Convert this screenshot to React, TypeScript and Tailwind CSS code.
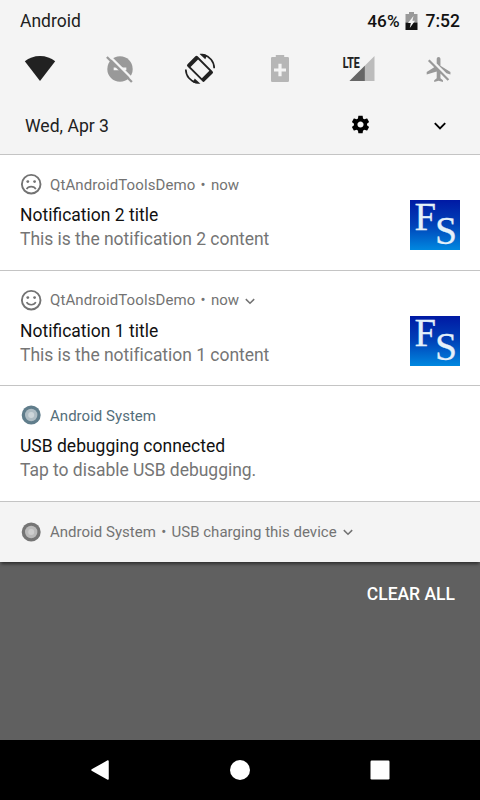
import type { ReactNode } from "react";

function StatusBar() {
  return (
    <div className="flex h-[42px] items-center justify-between px-5 text-[17.5px] leading-[20px] text-[#212121]">
      <span>Android</span>
      <div className="flex items-center font-medium text-[#111]">
        <span className="text-[17.2px]">46%</span>
        <svg className="ml-[5px] mr-2 -mt-px" width="13" height="18" viewBox="0 0 13 18">
          <path d="M0.5 2H4V0H9V2H12.5V10.5H0.5Z" fill="#999" />
          <path d="M0.5 10.5H12.5V18H0.5Z" fill="#111" />
          <path d="M8.5 4L3 11H5.8L4.8 16L10 8.8H7.4Z" fill="#f4f4f4" />
        </svg>
        <span className="text-[17.5px]">7:52</span>
      </div>
    </div>
  );
}

function QuickIcons() {
  return (
    <div className="flex h-[54px] items-center justify-between px-5">
      <svg width="40" height="40" viewBox="20 49 40 40">
        <path d="M40 81L24.8 61.3C29 58 34.2 56 40 56S51 58 55.2 61.3Z" fill="#212121" />
      </svg>
      <svg width="40" height="40" viewBox="100 49 40 40">
        <circle cx="120" cy="69" r="12.7" fill="#999" />
        <path d="M113.7 67.5H117.2L119.8 70.2H113.7Z" fill="#f4f4f4" />
        <path d="M121.5 67.5H126.3V70.2H124Z" fill="#f4f4f4" />
        <path d="M108.5 55L134 80.5" stroke="#f4f4f4" strokeWidth="2.4" />
        <path d="M106.9 57L131.9 82" stroke="#999" strokeWidth="2.3" />
      </svg>
      <svg width="40" height="40" viewBox="180 49 40 40">
        <g transform="translate(200 68.8) rotate(-45)">
          <rect x="-7.2" y="-12.1" width="14.4" height="24.2" rx="1.6" fill="#212121" />
          <rect x="-5.3" y="-8" width="10.6" height="16" fill="#f4f4f4" />
        </g>
        <path d="M203.5 54.9C209.6 56.2 214.1 61.6 214.2 68.2" fill="none" stroke="#212121" strokeWidth="1.7" />
        <path d="M199.6 53.9C202 53.7 204.5 54 207 55.2L205.3 59.2Z" fill="#212121" />
        <path d="M196.5 82.7C190.4 81.4 185.9 76 185.8 69.4" fill="none" stroke="#212121" strokeWidth="1.7" />
        <path d="M200.4 83.7C198 83.9 195.5 83.6 193 82.4L194.7 78.4Z" fill="#212121" />
      </svg>
      <svg width="40" height="40" viewBox="260 49 40 40">
        <path d="M272.3 57H275.8V55H284.2V57H287.7Q289 57 289 58.3V80.7Q289 82 287.7 82H272.3Q271 82 271 80.7V58.3Q271 57 272.3 57Z" fill="#b6b6b6" />
        <path d="M278.4 63.8H281.6V68.4H286V71.6H281.6V76.2H278.4V71.6H274V68.4H278.4Z" fill="#f4f4f4" />
      </svg>
      <svg width="40" height="40" viewBox="340 49 40 40">
        <path d="M349.5 81L374.5 56V81Z" fill="#bcbcbc" />
        <path d="M349.5 81L364.8 65.7V81Z" fill="#666" />
        <text x="342.7" y="67.6" fontSize="15" fontWeight="700" textLength="17" lengthAdjust="spacingAndGlyphs" fill="#212121" stroke="#212121" strokeWidth=".2">LTE</text>
      </svg>
      <svg width="40" height="40" viewBox="420 49 40 40">
        <g transform="translate(424.2 54.5) scale(1.25)" fill="#999">
          <path d="M13 9V3.5c0-.83-.67-1.5-1.5-1.5S10 2.67 10 3.5v3.68l7.83 7.83L21 16v-2l-8-5zM3 5.27l4.99 4.99L2 14v2l8-2.5V19l-2 1.5V22l3.5-1 3.5 1v-1.5L13 19v-3.73L18.73 21 20 19.73 4.27 4 3 5.27z" />
          <path d="M5.3 4L20.8 19.5" stroke="#f4f4f4" strokeWidth=".7" />
        </g>
      </svg>
    </div>
  );
}

function DateRow() {
  return (
    <div className="flex h-[58px] items-center pl-[25px] pr-[30px] text-[17.6px] text-[#212121]">
      <span className="flex-1 pt-[2px]">Wed, Apr 3</span>
      <svg className="mr-[59px] -mt-px" width="21" height="21" viewBox="0 0 24 24">
        <path d="M19.43 12.98c.04-.32.07-.64.07-.98s-.03-.66-.07-.98l2.11-1.65c.19-.15.24-.42.12-.64l-2-3.46c-.12-.22-.39-.3-.61-.22l-2.49 1c-.52-.4-1.08-.73-1.69-.98l-.38-2.65C14.46 2.18 14.25 2 14 2h-4c-.25 0-.46.18-.49.42l-.38 2.65c-.61.25-1.17.59-1.69.98l-2.49-1c-.23-.09-.49 0-.61.22l-2 3.46c-.13.22-.07.49.12.64l2.11 1.65c-.04.32-.07.65-.07.98s.03.66.07.98l-2.11 1.65c-.19.15-.24.42-.12.64l2 3.46c.12.22.39.3.61.22l2.49-1c.52.4 1.08.73 1.69.98l.38 2.65c.03.24.24.42.49.42h4c.25 0 .46-.18.49-.42l.38-2.65c.61-.25 1.17-.59 1.69-.98l2.49 1c.23.09.49 0 .61-.22l2-3.46c.12-.22.07-.49-.12-.64l-2.11-1.65zM12 15.5c-1.93 0-3.5-1.57-3.5-3.5s1.57-3.5 3.5-3.5 3.5 1.57 3.5 3.5-1.57 3.5-3.5 3.5z" />
      </svg>
      <svg width="20" height="20" viewBox="0 0 20 20">
        <path d="M4.8 8.2L10 13.4L15.2 8.2" fill="none" stroke="#000" strokeWidth="1.9" />
      </svg>
    </div>
  );
}

function Face({ sad = false }: { sad?: boolean }) {
  return (
    <svg width="22" height="22" viewBox="0 0 22 22">
      <circle cx="11.2" cy="11.2" r="9.3" fill="none" stroke="#737373" strokeWidth="1.9" />
      <circle cx="7.8" cy="8.6" r="1.4" fill="#737373" />
      <circle cx="14.6" cy="8.6" r="1.4" fill="#737373" />
      <path
        d={sad ? "M6.6 16.2C8.2 12.8 14.2 12.8 15.8 16.2" : "M6.6 13.2C8.2 16.6 14.2 16.6 15.8 13.2"}
        fill="none"
        stroke="#737373"
        strokeWidth="1.6"
      />
    </svg>
  );
}

function SystemDot({ blue = false }: { blue?: boolean }) {
  return (
    <svg width="22" height="22" viewBox="0 0 22 22">
      <circle cx="11.2" cy="11" r="9.5" fill={blue ? "#607d8b" : "#757575"} />
      <circle cx="11.2" cy="11" r="6.2" fill={blue ? "#afbdc4" : "#bababa"} />
      <circle cx="11.2" cy="11" r="3" fill={blue ? "#cdd6da" : "#cecece"} />
    </svg>
  );
}

function Chevron() {
  return (
    <svg className="ml-[5px]" width="12" height="12" viewBox="0 0 12 12">
      <path d="M1.8 4.1L6 8.3L10.2 4.1" fill="none" stroke="#737373" strokeWidth="1.5" />
    </svg>
  );
}

function Bullet() {
  return <span className="mx-[1.5px]"> • </span>;
}

function Logo() {
  return (
    <svg className="mt-[45px] overflow-visible" width="50" height="50" viewBox="0 0 50 50">
      <defs>
        <linearGradient id="logoFill" x1="0" y1="0" x2="0" y2="1">
          <stop offset="0" stopColor="#0019a4" />
          <stop offset=".5" stopColor="#0042b8" />
          <stop offset="1" stopColor="#0088e0" />
        </linearGradient>
      </defs>
      <rect width="50" height="50" fill="url(#logoFill)" />
      <g fill="#e4f0fa" stroke="#e4f0fa" strokeWidth=".3" fontFamily="Liberation Serif, serif">
        <text x="4.5" y="30.3" fontSize="40" textLength="21.5" lengthAdjust="spacingAndGlyphs">F</text>
        <text x="25" y="44" fontSize="41" textLength="22" lengthAdjust="spacingAndGlyphs">S</text>
      </g>
    </svg>
  );
}

type CardProps = {
  icon: ReactNode;
  app: ReactNode;
  title: string;
  body: string;
  logo?: boolean;
  className: string;
  labelClassName?: string;
};

function Card({ icon, app, title, body, logo, className, labelClassName = "pt-[2px]" }: CardProps) {
  return (
    <section className={`flex justify-between border-t border-[#c4c4c4] bg-white px-5 ${className}`}>
      <div className="pt-[18px]">
        <div className="flex h-[22px] items-center text-[15px] text-[#737373]">
          {icon}
          <div className={`ml-2 flex items-center whitespace-pre ${labelClassName}`}>{app}</div>
        </div>
        <div className="mt-[8px] text-[17.5px] leading-[25px] text-[#111]">{title}</div>
        <div className="-mt-px text-[17.5px] leading-[24px] tracking-[-0.03px] text-[#757575]">{body}</div>
      </div>
      {logo && <Logo />}
    </section>
  );
}

export default function App() {
  return (
    <main className="flex h-[800px] w-[480px] flex-col overflow-hidden bg-[#606060] font-['Roboto',sans-serif]">
      <header className="h-[154px] bg-[#f4f4f4]">
        <StatusBar />
        <QuickIcons />
        <DateRow />
      </header>
      <Card
        className="h-[116px]"
        icon={<Face sad />}
        app={<><span className="tracking-[0.1px]">QtAndroidToolsDemo</span><Bullet />now</>}
        title="Notification 2 title"
        body="This is the notification 2 content"
        logo
      />
      <Card
        className="h-[115px]"
        labelClassName="pt-px"
        icon={<Face />}
        app={<><span className="tracking-[0.1px]">QtAndroidToolsDemo</span><Bullet />now<Chevron /></>}
        title="Notification 1 title"
        body="This is the notification 1 content"
        logo
      />
      <Card
        className="h-[116px]"
        icon={<SystemDot blue />}
        app={<span className="tracking-[0.03px] text-[#546e7a]">Android System</span>}
        title="USB debugging connected"
        body="Tap to disable USB debugging."
      />
      <section className="z-10 flex h-[61px] items-center border-t border-[#c4c4c4] bg-[#f4f4f4] px-5 text-[15px] text-[#737373] shadow-[0_3px_3px_-1px_rgba(0,0,0,0.5)]">
        <SystemDot />
        <div className="ml-2 flex items-center whitespace-pre tracking-[0.02px]">
          Android System<Bullet />USB charging this device
        </div>
        <Chevron />
      </section>
      <div className="flex flex-1 items-start justify-end pr-[25px] pt-[22px]">
        <button className="text-[17.5px] leading-[20px] font-medium text-white">CLEAR ALL</button>
      </div>
      <nav className="flex h-[60px] items-center justify-between bg-black px-20">
        <svg width="40" height="40" viewBox="0 0 40 40">
          <path d="M12 20L28 11V29Z" fill="#fff" stroke="#fff" strokeWidth="1.5" strokeLinejoin="round" />
        </svg>
        <svg width="40" height="40" viewBox="0 0 40 40">
          <circle cx="20" cy="20" r="10" fill="#fff" />
        </svg>
        <svg width="40" height="40" viewBox="0 0 40 40">
          <rect x="10.5" y="10.5" width="19" height="19" rx="1.2" fill="#fff" />
        </svg>
      </nav>
    </main>
  );
}
